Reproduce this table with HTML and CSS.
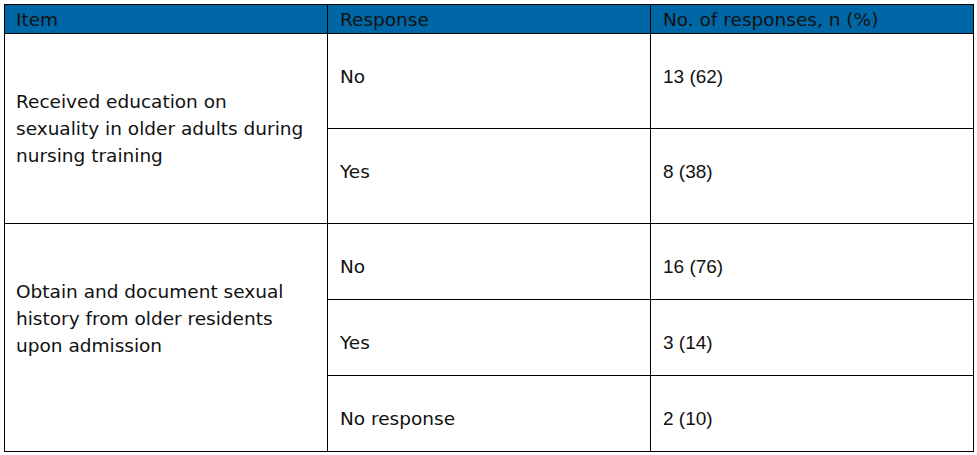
FILE: index.html
```html
<!DOCTYPE html>
<html>
<head>
<meta charset="utf-8">
<link rel="stylesheet" href="styles.css">
</head>
<body>
<div class="wrap">
<table class="grid">
  <colgroup><col class="c"><col class="c"><col class="c"></colgroup>
  <thead>
    <tr class="head"><th>Item</th><th>Response</th><th>No. of responses, n (%)</th></tr>
  </thead>
  <tbody>
    <tr>
      <td rowspan="2" class="item">Received education on sexuality in older adults during nursing training</td>
      <td class="resp up">No</td><td class="val up">13 (62)</td>
    </tr>
    <tr><td class="resp up">Yes</td><td class="val up">8 (38)</td></tr>
    <tr>
      <td rowspan="3" class="item item2">Obtain and document sexual history from older residents upon admission</td>
      <td class="resp down">No</td><td class="val down">16 (76)</td>
    </tr>
    <tr><td class="resp down">Yes</td><td class="val down">3 (14)</td></tr>
    <tr><td class="resp down">No response</td><td class="val down">2 (10)</td></tr>
  </tbody>
</table>
</div>
</body>
</html>
```
FILE: styles.css
```css
html, body { margin: 0; padding: 0; background: #fff; }
.wrap { padding: 4px 0 0 4px; }
.grid {
  border-collapse: collapse;
  table-layout: fixed;
  width: 970px;
  font-family: "DejaVu Sans", sans-serif;
  font-size: 18.5px;
  color: #111;
}
.c { width: 323px; }
.grid th, .grid td {
  border: 1px solid #000;
  text-align: left;
  font-weight: normal;
  vertical-align: middle;
  padding: 0 10px 0 11px;
  line-height: 27px;
}
.grid .head th { background: #0067a6; color: #111; height: 28px; padding: 0 10px 0 12px; }
.grid .head th:first-child { padding-left: 11px; }
.grid .item { padding-right: 20px; }
.grid .item2 { padding-bottom: 38px; }
.grid .resp { padding-left: 12px; }
.grid .val { font-family: "Liberation Sans", Arial, sans-serif; font-size: 19px; padding-left: 12px; }
.grid .up { height: 84px; padding-bottom: 10px; }
.grid .down { height: 66px; padding-top: 9px; }
```
